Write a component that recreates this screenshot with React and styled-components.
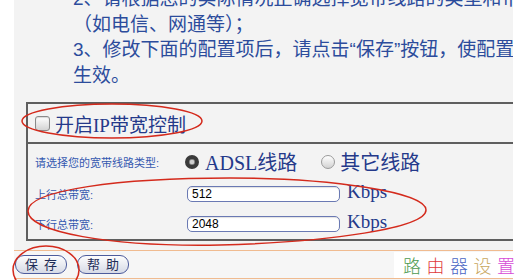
import React from 'react'
import styled, { createGlobalStyle } from 'styled-components'

const GlobalStyle = createGlobalStyle`
  html, body {
    margin: 0;
    padding: 0;
    background: #ffffff;
  }
`

const Page = styled.div`
  position: relative;
  width: 527px;
  height: 280px;
  overflow: hidden;
  background: #ffffff;
  font-family: "Liberation Sans", "Noto Sans CJK SC", sans-serif;
`

const Panel = styled.div`
  margin-left: 14px;
  width: 499px;
  height: 280px;
  background: #f3f3f3;
  overflow: hidden;
`

// Notes : =========================
const Notes = styled.div`
  margin-top: -14px;
  padding-left: 59px;
  color: #2c4c9c;
  font-size: 19px;
  line-height: 25.5px;
  white-space: nowrap;
`

// Box : =========================
const Box = styled.div`
  margin: 14px -20px 0 12px;
  border-top: 2px solid #5e5e5e;
  border-bottom: 2px solid #5e5e5e;
  border-left: 2px solid #5e5e5e;
`

const Head = styled.div`
  height: 38px;
  display: flex;
  align-items: center;
  gap: 5px;
  padding-left: 7px;
  border-bottom: 2px solid #5e5e5e;
  color: #24398a;
  font-family: "Liberation Serif", "Noto Sans CJK SC", serif;
  font-size: 19px;
`

const Check = styled.span`
  width: 13px;
  height: 13px;
  border: 1px solid #8a8a8a;
  border-radius: 3px;
  background: linear-gradient(#ffffff, #d4d4d4);
  box-shadow: inset 0 1px 1px rgba(0, 0, 0, 0.15);
`

const Row = styled.div`
  height: ${p => p.h}px;
  display: grid;
  grid-template-columns: 150px 1fr;
  align-items: center;
  padding-left: 7px;
`

const Label = styled.span`
  color: #3558b0;
  font-size: 11px;
  white-space: nowrap;
`

const Field = styled.div`
  display: flex;
  align-items: center;
  color: #24398a;
  font-family: "Liberation Serif", "Noto Sans CJK SC", serif;
  font-size: 20px;
  white-space: nowrap;
`

const Radio = styled.span`
  width: 14px;
  height: 14px;
  border-radius: 50%;
  box-sizing: border-box;
  margin-right: ${p => p.gap}px;
  border: ${p => p.on ? '4px solid #3a3a3a' : '1px solid #9a9a9a'};
  background: ${p => p.on
    ? 'radial-gradient(circle, #cfcfcf 0 45%, #8c8c8c 60%)'
    : 'linear-gradient(#ffffff, #d2d2d2)'};
`

const Input = styled.div`
  width: 147px;
  height: 14px;
  margin-left: 2px;
  padding: 0 0 0 4px;
  border: 1px solid #6a79b3;
  border-radius: 5px;
  background: #ffffff;
  color: #000000;
  font-family: "Liberation Sans", sans-serif;
  font-size: 12px;
  line-height: 15px;
  box-shadow: inset 0 1px 1px rgba(0, 0, 0, 0.12);
`

const Unit = styled.span`
  margin: -5px 0 0 7px;
  font-size: 19px;
`

// Footer : =========================
const Footer = styled.div`
  margin-top: 9px;
  height: 27px;
  display: flex;
  align-items: center;
  gap: 10px;
  padding-left: 1px;
  border-top: 1px solid #f0bb90;
  border-bottom: 1px solid #f0bb90;
  background: #f6f6f6;
`

const Button = styled.div`
  width: 50px;
  height: 17px;
  border: 1px solid #4d5c9c;
  border-radius: 9px;
  background: linear-gradient(#fdfdfd, #d6dae6);
  color: #1f2d58;
  font-size: 13px;
  line-height: 17px;
  text-align: center;
  letter-spacing: 6px;
  text-indent: 6px;
`

const Mark = styled.div`
  position: absolute;
  left: 394px;
  top: 252px;
  width: 133px;
  height: 26px;
  padding-left: 9px;
  box-sizing: border-box;
  display: flex;
  align-items: center;
  gap: 5.5px;
  background: #ffffff;
  font-family: "Noto Sans CJK SC", sans-serif;
  font-size: 18px;
  font-weight: 300;
`

const MarkChar = styled.span`
  color: ${p => p.c};
`

const Ink = styled.svg`
  position: absolute;
  left: 0;
  top: 0;
  pointer-events: none;
`

const markChars = [
  ['路', '#4d9a50'],
  ['由', '#e0393a'],
  ['器', '#4a66c4'],
  ['设', '#c8a860'],
  ['置', '#d64ad6'],
]

const App = () => {
  return (
    <Page>
      <GlobalStyle />
      <Panel>
        <Notes>
          <div>2、请根据您的实际情况正确选择宽带线路的类型和带宽大小</div>
          <div>（如电信、网通等）；</div>
          <div>3、修改下面的配置项后，请点击“保存”按钮，使配置</div>
          <div>生效。</div>
        </Notes>

        <Box>
          <Head>
            <Check />
            <span>开启IP带宽控制</span>
          </Head>
          <Row h={35}>
            <Label>请选择您的宽带线路类型:</Label>
            <Field>
              <Radio on gap={6} />
              <span>ADSL线路</span>
              <Radio gap={5} style={{ marginLeft: 24 }} />
              <span>其它线路</span>
            </Field>
          </Row>
          <Row h={30}>
            <Label>上行总带宽:</Label>
            <Field>
              <Input>512</Input>
              <Unit>Kbps</Unit>
            </Field>
          </Row>
          <Row h={30}>
            <Label>下行总带宽:</Label>
            <Field>
              <Input>2048</Input>
              <Unit>Kbps</Unit>
            </Field>
          </Row>
        </Box>

        <Footer>
          <Button>保存</Button>
          <Button>帮助</Button>
        </Footer>
      </Panel>

      <Mark>
        {markChars.map(([ch, c]) => <MarkChar key={ch} c={c}>{ch}</MarkChar>)}
      </Mark>

      <Ink width="527" height="280" viewBox="0 0 527 280">
        <g fill="none" stroke="#d42a1c" strokeWidth="1.5">
          <ellipse cx="112" cy="121" rx="90" ry="17" />
          <path d="M230 178 C330 178 426 192 426 210 C426 228 330 242 220 245 C110 247 28 232 28 211 C28 190 120 178 230 178 Z" />
          <ellipse cx="46" cy="270" rx="33" ry="24" />
        </g>
      </Ink>
    </Page>
  )
}

export default App
